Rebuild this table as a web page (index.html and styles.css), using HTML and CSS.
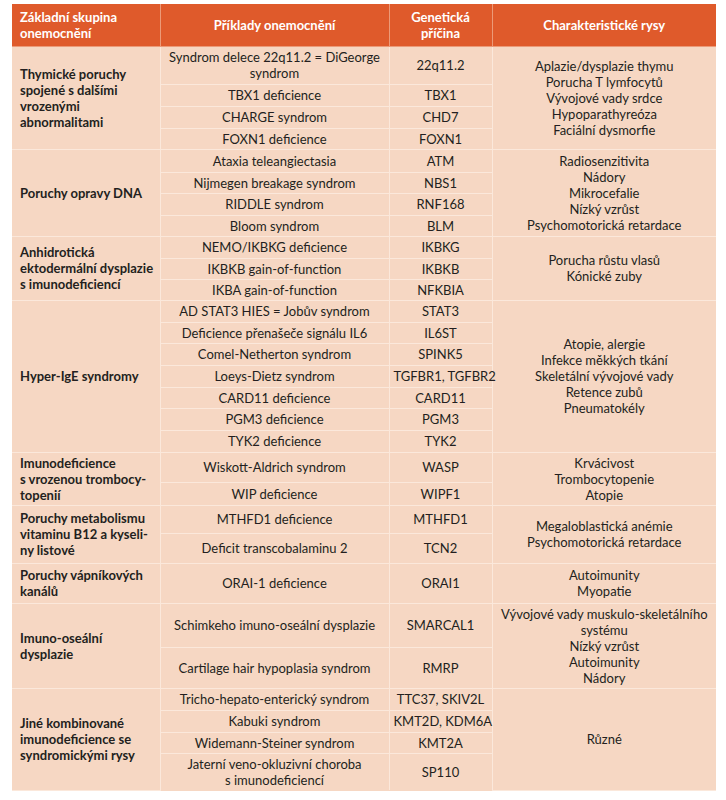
FILE: index.html
```html
<!DOCTYPE html>
<html lang="cs">
  <head>
    <meta charset="UTF-8" />
    <meta name="viewport" content="width=device-width, initial-scale=1.0" />
    <title>Syndromické imunodeficience</title>
    <link rel="stylesheet" href="styles.css">
  </head>
  <body>
    <table class="pid-table">
      <colgroup>
        <col class="c-group" />
        <col class="c-disease" />
        <col class="c-gene" />
        <col class="c-feature" />
      </colgroup>
      <thead>
        <tr class="r42">
          <th class="grp">Základní skupina<br>onemocnění</th>
          <th>Příklady onemocnění</th>
          <th>Genetická<br>příčina</th>
          <th>Charakteristické rysy</th>
        </tr>
      </thead>
      <tbody>
        <!-- Thymické poruchy -->
        <tr class="r38">
          <td class="grp" rowspan="4">Thymické poruchy<br>spojené s dalšími<br>vrozenými<br>abnormalitami</td>
          <td>Syndrom delece 22q11.2 = DiGeorge<br>syndrom</td>
          <td>22q11.2</td>
          <td class="feat" rowspan="4">Aplazie/dysplazie thymu<br>Porucha T lymfocytů<br>Vývojové vady srdce<br>Hypoparathyreóza<br>Faciální dysmorfie</td>
        </tr>
        <tr class="r22"><td>TBX1 deficience</td><td>TBX1</td></tr>
        <tr class="r22"><td>CHARGE syndrom</td><td>CHD7</td></tr>
        <tr class="r21"><td>FOXN1 deficience</td><td>FOXN1</td></tr>

        <!-- Poruchy opravy DNA -->
        <tr class="r23">
          <td class="grp" rowspan="4">Poruchy opravy DNA</td>
          <td>Ataxia teleangiectasia</td>
          <td>ATM</td>
          <td class="feat" rowspan="4">Radiosenzitivita<br>Nádory<br>Mikrocefalie<br>Nízký vzrůst<br>Psychomotorická retardace</td>
        </tr>
        <tr class="r21"><td>Nijmegen breakage syndrom</td><td>NBS1</td></tr>
        <tr class="r22"><td>RIDDLE syndrom</td><td>RNF168</td></tr>
        <tr class="r21"><td>Bloom syndrom</td><td>BLM</td></tr>

        <!-- Anhidrotická ektodermální dysplazie -->
        <tr class="r22">
          <td class="grp" rowspan="3">Anhidrotická<br>ektodermální dysplazie<br>s imunodeficiencí</td>
          <td>NEMO/IKBKG deficience</td>
          <td>IKBKG</td>
          <td class="feat" rowspan="3">Porucha růstu vlasů<br>Kónické zuby</td>
        </tr>
        <tr class="r21"><td>IKBKB gain-of-function</td><td>IKBKB</td></tr>
        <tr class="r21"><td>IKBA gain-of-function</td><td>NFKBIA</td></tr>

        <!-- Hyper-IgE -->
        <tr class="r22">
          <td class="grp" rowspan="7">Hyper-IgE syndromy</td>
          <td>AD STAT3 HIES = Jobův syndrom</td>
          <td>STAT3</td>
          <td class="feat" rowspan="7">Atopie, alergie<br>Infekce měkkých tkání<br>Skeletální vývojové vady<br>Retence zubů<br>Pneumatokély</td>
        </tr>
        <tr class="r21"><td>Deficience přenašeče signálu IL6</td><td>IL6ST</td></tr>
        <tr class="r22"><td>Comel-Netherton syndrom</td><td>SPINK5</td></tr>
        <tr class="r22"><td>Loeys-Dietz syndrom</td><td>TGFBR1, TGFBR2</td></tr>
        <tr class="r21"><td>CARD11 deficience</td><td>CARD11</td></tr>
        <tr class="r22"><td>PGM3 deficience</td><td>PGM3</td></tr>
        <tr class="r22"><td>TYK2 deficience</td><td>TYK2</td></tr>

        <!-- Trombocytopenie -->
        <tr class="r30">
          <td class="grp" rowspan="2">Imunodeficience<br>s vrozenou trombocy-<br>topenií</td>
          <td>Wiskott-Aldrich syndrom</td>
          <td>WASP</td>
          <td class="feat" rowspan="2">Krvácivost<br>Trombocytopenie<br>Atopie</td>
        </tr>
        <tr class="r23"><td>WIP deficience</td><td>WIPF1</td></tr>

        <!-- B12 a kyselina listová -->
        <tr class="r28">
          <td class="grp" rowspan="2">Poruchy metabolismu<br>vitaminu B12 a kyseli-<br>ny listové</td>
          <td>MTHFD1 deficience</td>
          <td>MTHFD1</td>
          <td class="feat" rowspan="2">Megaloblastická anémie<br>Psychomotorická retardace</td>
        </tr>
        <tr class="r30"><td>Deficit transcobalaminu 2</td><td>TCN2</td></tr>

        <!-- Vápníkové kanály -->
        <tr class="r40">
          <td class="grp">Poruchy vápníkových<br>kanálů</td>
          <td>ORAI-1 deficience</td>
          <td>ORAI1</td>
          <td class="feat">Autoimunity<br>Myopatie</td>
        </tr>

        <!-- Imuno-oseální dysplazie -->
        <tr class="r44">
          <td class="grp" rowspan="2">Imuno-oseální<br>dysplazie</td>
          <td>Schimkeho imuno-oseální dysplazie</td>
          <td>SMARCAL1</td>
          <td class="feat" rowspan="2">Vývojové vady muskulo-skeletálního<br>systému<br>Nízký vzrůst<br>Autoimunity<br>Nádory</td>
        </tr>
        <tr class="r41"><td>Cartilage hair hypoplasia syndrom</td><td>RMRP</td></tr>

        <!-- Jiné -->
        <tr class="r22">
          <td class="grp" rowspan="4">Jiné kombinované<br>imunodeficience se<br>syndromickými rysy</td>
          <td>Tricho-hepato-enterický syndrom</td>
          <td>TTC37, SKIV2L</td>
          <td class="feat" rowspan="4">Různé</td>
        </tr>
        <tr class="r22"><td>Kabuki syndrom</td><td>KMT2D, KDM6A</td></tr>
        <tr class="r21"><td>Widemann-Steiner syndrom</td><td>KMT2A</td></tr>
        <tr class="r37"><td>Jaterní veno-okluzivní choroba<br>s imunodeficiencí</td><td>SP110</td></tr>
      </tbody>
    </table>
  </body>
</html>
```

FILE: styles.css
```css
* {
  margin: 0;
  padding: 0;
  box-sizing: border-box;
}

body {
  font-family: Lato, "Liberation Sans", sans-serif;
  font-size: 13px;
  line-height: 16px;
  color: #231f20;
  background-color: #fff;
  padding: 4px 10px 0 12px;
}

.pid-table {
  width: 704px;
  border-collapse: collapse;
  table-layout: fixed;
  background-color: #f6d7c3;
}

.c-group {
  width: 148px;
}

.c-disease {
  width: 229px;
}

.c-gene {
  width: 103px;
}

.c-feature {
  width: 224px;
}

th,
td {
  padding: 0 4px;
  text-align: center;
  vertical-align: middle;
  white-space: nowrap;
  border: 1px solid #fbe8db;
}

.pid-table tr > :first-child {
  border-left: none;
}

.pid-table tr > .feat,
.pid-table thead th:last-child {
  border-right: none;
}

thead th {
  background-color: #df5a2b;
  color: #fff;
  font-weight: 700;
  border-top: none;
  border-color: #ec9a78;
}

.grp {
  text-align: left;
  padding-left: 8px;
  font-weight: 700;
}

tbody tr:last-child td {
  border-bottom: none;
}

.r21 { height: 21px; }
.r22 { height: 22px; }
.r23 { height: 23px; }
.r28 { height: 28px; }
.r30 { height: 30px; }
.r37 { height: 37px; }
.r38 { height: 38px; }
.r40 { height: 40px; }
.r41 { height: 41px; }
.r42 { height: 42px; }
.r44 { height: 44px; }
```
